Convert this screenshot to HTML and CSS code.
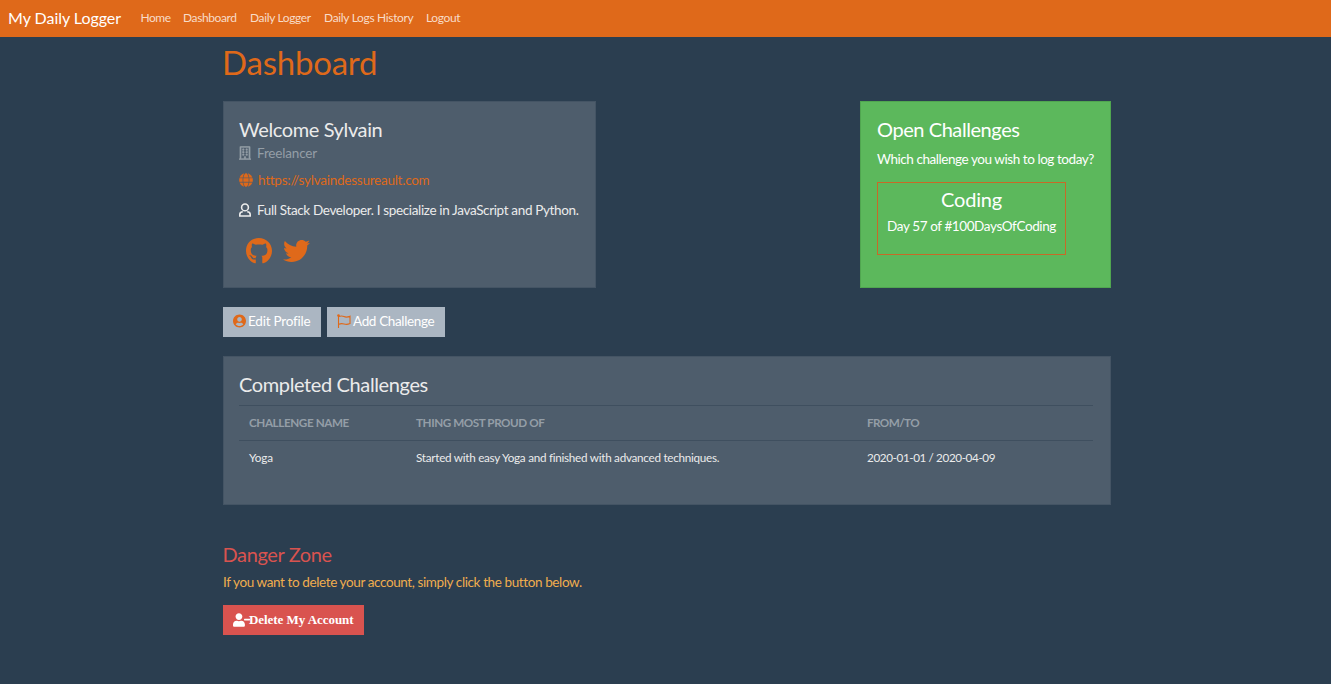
FILE: index.html
```html
<!DOCTYPE html>
<html lang="en">
<head>
<meta charset="utf-8">
<title>My Daily Logger</title>
<link rel="stylesheet" href="styles.css">
</head>
<body>
<nav class="navbar">
  <a class="brand">My Daily Logger</a>
  <a class="nav-link l1">Home</a><a class="nav-link l2">Dashboard</a><a class="nav-link l3">Daily Logger</a><a class="nav-link l4">Daily Logs History</a><a class="nav-link l5">Logout</a>
</nav>
<main class="container">
  <h1><span class="t-h1">Dashboard</span></h1>
  <div class="cards">
    <section class="card profile">
      <h4><span class="t-welcome">Welcome Sylvain</span></h4>
      <div class="row company">
        <svg class="icon i-building" viewBox="0 0 448 512"><path d="M128 148v-40c0-6.600 5.400-12 12-12h40c6.600 0 12 5.400 12 12v40c0 6.600-5.400 12-12 12h-40c-6.600 0-12-5.400-12-12zm140 12h40c6.600 0 12-5.400 12-12v-40c0-6.600-5.400-12-12-12h-40c-6.600 0-12 5.400-12 12v40c0 6.600 5.400 12 12 12zm-128 96h40c6.600 0 12-5.400 12-12v-40c0-6.600-5.400-12-12-12h-40c-6.600 0-12 5.400-12 12v40c0 6.600 5.400 12 12 12zm128 0h40c6.600 0 12-5.400 12-12v-40c0-6.600-5.400-12-12-12h-40c-6.600 0-12 5.400-12 12v40c0 6.600 5.400 12 12 12zm-76 84v-40c0-6.600-5.400-12-12-12h-40c-6.600 0-12 5.400-12 12v40c0 6.600 5.400 12 12 12h40c6.600 0 12-5.400 12-12zm76 12h40c6.600 0 12-5.400 12-12v-40c0-6.600-5.400-12-12-12h-40c-6.600 0-12 5.400-12 12v40c0 6.600 5.400 12 12 12zm180 124v36H0v-36c0-6.600 5.400-12 12-12h19.500V24c0-13.300 10.700-24 24-24h337c13.300 0 24 10.700 24 24v440H436c6.600 0 12 5.400 12 12zM79.500 463H192v-67c0-6.600 5.400-12 12-12h40c6.600 0 12 5.400 12 12v67h112.500V49L80 48z"/></svg>
        <span class="t-free">Freelancer</span>
      </div>
      <div class="row site">
        <svg class="icon i-globe" viewBox="0 0 496 512"><path d="M336.500 160C322 70.700 287.800 8 248 8s-74 62.700-88.500 152h177zM152 256c0 22.200 1.200 43.500 3.300 64h185.300c2.100-20.500 3.300-41.800 3.300-64s-1.200-43.500-3.300-64H155.300c-2.100 20.500-3.300 41.800-3.300 64zm324.700-96c-28.600-67.900-86.500-120.400-158-141.600 24.400 33.800 41.200 84.700 50 141.600h108zM177.200 18.400C105.800 39.600 47.800 92.100 19.300 160h108c8.700-56.900 25.500-107.800 49.900-141.600zM487.400 192H372.700c2.100 21 3.300 42.500 3.300 64s-1.200 43-3.300 64h114.600c5.500-20.500 8.600-41.800 8.600-64s-3.100-43.500-8.500-64zM120 256c0-21.500 1.200-43 3.300-64H8.600C3.200 212.500 0 233.800 0 256s3.200 43.500 8.600 64h114.600c-2-21-3.200-42.500-3.200-64zm39.500 96c14.500 89.300 48.700 152 88.500 152s74-62.700 88.500-152h-177zm159.300 141.600c71.400-21.200 129.400-73.700 158-141.600h-108c-8.800 56.900-25.600 107.800-50 141.600zM19.300 352c28.600 67.900 86.500 120.400 158 141.600-24.400-33.800-41.200-84.700-50-141.600h-108z"/></svg>
        <a class="t-url">https://sylvaindessureault.com</a>
      </div>
      <div class="row bio">
        <svg class="icon i-user" viewBox="0 0 12 14"><g fill="none" stroke="currentColor" stroke-width="1.600"><circle cx="6" cy="4.400" r="3.400"/><path d="M3.800 8.800C2 9 .8 10 .8 11.500v1.500h10.400v-1.500C11.200 10 10 9 8.200 8.800"/></g></svg>
        <span class="t-bio">Full Stack Developer. I specialize in JavaScript and Python.</span>
      </div>
      <div class="social">
        <svg class="i-github" viewBox="0 0 496 512"><path d="M165.900 397.400c0 2-2.300 3.600-5.200 3.600-3.300.3-5.600-1.300-5.600-3.600 0-2 2.300-3.600 5.200-3.600 3-.3 5.600 1.300 5.600 3.600zm-31.100-4.500c-.7 2 1.300 4.300 4.300 4.900 2.600 1 5.600 0 6.200-2s-1.300-4.300-4.300-5.200c-2.600-.7-5.500.3-6.200 2.300zm44.200-1.700c-2.900.7-4.900 2.600-4.600 4.900.3 2 2.900 3.300 5.900 2.600 2.900-.7 4.900-2.600 4.600-4.600-.3-1.900-3-3.200-5.900-2.900zM244.800 8C106.100 8 0 113.300 0 252c0 110.900 69.800 205.800 169.500 239.200 12.800 2.300 17.300-5.600 17.300-12.100 0-6.200-.3-40.400-.3-61.400 0 0-70 15-84.700-29.800 0 0-11.400-29.100-27.800-36.600 0 0-22.900-15.700 1.600-15.400 0 0 24.900 2 38.600 25.800 21.900 38.600 58.600 27.500 72.900 20.900 2.300-16 8.800-27.100 16-33.700-55.900-6.200-112.300-14.300-112.300-110.500 0-27.500 7.600-41.300 23.600-58.900-2.600-6.500-11.100-33.300 2.600-67.900 20.900-6.500 69 27 69 27 20-5.600 41.500-8.500 62.800-8.500s42.800 2.900 62.800 8.500c0 0 48.100-33.600 69-27 13.700 34.700 5.200 61.400 2.600 67.900 16 17.700 25.800 31.500 25.800 58.900 0 96.500-58.900 104.200-114.800 110.500 9.200 7.900 17 22.900 17 46.400 0 33.700-.3 75.400-.3 83.600 0 6.500 4.600 14.400 17.300 12.100C428.200 457.800 496 362.900 496 252 496 113.300 383.500 8 244.800 8z"/></svg>
        <svg class="i-twitter" viewBox="0 0 512 512"><path d="M459.370 151.716c.325 4.548.325 9.097.325 13.645 0 138.720-105.583 298.558-298.558 298.558-59.452 0-114.680-17.219-161.137-47.106 8.447.974 16.568 1.299 25.340 1.299 49.055 0 94.213-16.568 130.274-44.832-46.132-.975-84.792-31.188-98.112-72.772 6.498.974 12.995 1.624 19.818 1.624 9.421 0 18.843-1.300 27.614-3.573-48.081-9.747-84.143-51.980-84.143-102.985v-1.299c13.969 7.797 30.214 12.670 47.431 13.319-28.264-18.843-46.781-51.005-46.781-87.391 0-19.492 5.197-37.360 14.294-52.954 51.655 63.675 129.300 105.258 216.365 109.807-1.624-7.797-2.599-15.918-2.599-24.040 0-57.828 46.782-104.934 104.934-104.934 30.213 0 57.502 12.670 76.670 33.137 23.715-4.548 46.456-13.320 66.599-25.340-7.798 24.366-24.366 44.833-46.132 57.827 21.117-2.273 41.584-8.122 60.426-16.243-14.292 20.791-32.161 39.308-52.628 54.253z"/></svg>
      </div>
    </section>
    <section class="card open">
      <h4><span class="t-open">Open Challenges</span></h4>
      <p><span class="t-which">Which challenge you wish to log today?</span></p>
      <div class="challenge">
        <h4><span class="t-coding">Coding</span></h4>
        <p><span class="t-day">Day 57 of #100DaysOfCoding</span></p>
      </div>
    </section>
  </div>
  <div class="actions">
    <a class="btn edit"><svg class="icon i-circle" viewBox="0 0 496 512"><path d="M248 8C111 8 0 119 0 256s111 248 248 248 248-111 248-248S385 8 248 8zm0 96c48.600 0 88 39.400 88 88s-39.400 88-88 88-88-39.400-88-88 39.400-88 88-88zm0 344c-58.700 0-111.300-26.600-146.500-68.200 18.800-35.400 55.600-59.800 98.500-59.800 2.400 0 4.800.4 7.100 1.100 13 4.200 26.600 6.900 40.900 6.900 14.300 0 28-2.700 40.900-6.900 2.300-.7 4.700-1.100 7.100-1.100 42.900 0 79.700 24.400 98.500 59.800C359.300 421.400 306.700 448 248 448z"/></svg><span class="t-edit">Edit Profile</span></a>
    <a class="btn add"><svg class="icon i-flag" viewBox="0 0 14 14"><g fill="none" stroke="currentColor"><path d="M1.500 1v13" stroke-width="1.100"/><path d="M1.700 2.600c2-.8 3.500-.8 5.300 0s3.500.7 6-.4v7.400c-2.400 1.100-4.200 1-6 .4s-3.300-.6-5.300.3" stroke-width="1.100"/></g><circle cx="1.500" cy="1.500" r="1.300"/></svg><span class="t-add">Add Challenge</span></a>
  </div>
  <section class="card completed">
    <h4><span class="t-comp">Completed Challenges</span></h4>
    <table>
      <thead><tr><th class="c1"><span class="t-th1">CHALLENGE NAME</span></th><th class="c2"><span class="t-th2">THING MOST PROUD OF</span></th><th><span class="t-th3">FROM/TO</span></th></tr></thead>
      <tbody><tr><td><span class="t-yoga">Yoga</span></td><td><span class="t-start">Started with easy Yoga and finished with advanced techniques.</span></td><td><span class="t-date">2020-01-01 / 2020-04-09</span></td></tr></tbody>
    </table>
  </section>
  <section class="danger">
    <h4><span class="t-danger">Danger Zone</span></h4>
    <p><span class="t-warn">If you want to delete your account, simply click the button below.</span></p>
    <button class="delete"><svg class="i-minus" viewBox="0 0 640 512"><path d="M624 208H432c-8.800 0-16 7.200-16 16v32c0 8.800 7.200 16 16 16h192c8.800 0 16-7.200 16-16v-32c0-8.800-7.200-16-16-16zm-400 48c70.700 0 128-57.300 128-128S294.700 0 224 0 96 57.300 96 128s57.300 128 128 128zm89.600 32h-16.700c-22.200 10.200-46.900 16-72.900 16s-50.600-5.800-72.900-16h-16.700C60.200 288 0 348.200 0 422.400V464c0 26.500 21.500 48 48 48h352c26.500 0 48-21.500 48-48v-41.600c0-74.200-60.200-134.400-134.400-134.400z"/></svg><span class="t-del">Delete My Account</span></button>
  </section>
</main>
</body>
</html>
```
FILE: styles.css
```css
* { box-sizing: border-box; }
body { margin: 0; background: #2b3e50; color: #ebebeb; font: 13.500px/21px Lato, sans-serif; white-space: nowrap; letter-spacing: -.37px; }
h1, h4, p { margin: 0; font-weight: 400; }
svg { fill: currentColor; flex: none; display: block; }
.navbar { height: 37px; background: #df691a; display: flex; align-items: center; padding: 0 8px; font-size: 12px; color: #f8dcc8; }
.brand { font-size: 16px; color: #fff; width: 132.500px; letter-spacing: -.03px; padding-bottom: 2px; }
.nav-link { line-height: 18px; padding-bottom: 1px; }
.l1 { width: 42.500px; letter-spacing: -.5px; }
.l2 { width: 67px; letter-spacing: -.39px; }
.l3 { width: 74px; letter-spacing: -.36px; }
.l4 { width: 102px; letter-spacing: -.33px; }
.l5 { letter-spacing: -.38px; }
.container { width: 888px; margin-left: 223px; }
h1 { color: #df691a; font-size: 33px; line-height: 42px; padding-top: 4px; height: 64px; letter-spacing: -.22px; text-indent: -1px; }
.cards { display: flex; justify-content: space-between; }
.card { background: #4e5d6c; border: 1px solid #445464; padding: 15px; }
.profile { width: 373px; height: 187px; }
h4 { font-size: 20px; line-height: 24px; height: 25px; letter-spacing: -.38px; }
.t-open { letter-spacing: -.43px; }
.t-coding { letter-spacing: -.2px; }
.row { display: flex; align-items: center; height: 21px; }
.row span, .row a { padding-top: 2px; }
.icon { height: 14px; margin-right: 6px; }
.company { color: #949ea7; }
.t-free { letter-spacing: -.17px; }
.i-building { width: 12px; stroke: currentColor; stroke-width: 14; }
.site { color: #df691a; margin-top: 6px; }
.site .icon { margin-right: 5px; }
.i-globe { width: 14px; stroke: currentColor; stroke-width: 8; }
.t-url { letter-spacing: -.25px; }
.bio { margin-top: 9px; }
.t-bio { letter-spacing: -.35px; }
.i-user { width: 12px; }
.social { display: flex; color: #df691a; gap: 11px; padding: 17px 0 0 7px; }
.i-github { width: 26px; height: 28px; }
.i-twitter { width: 27px; height: 28px; }
.open { background: #5cb85c; border-color: #50a650; color: #fff; width: 251px; padding-left: 16px; }
.open > p { margin-top: 7px; }
.t-which { letter-spacing: -.44px; }
.challenge { width: 189px; height: 73px; border: 1px solid #c76a28; margin-top: 12px; padding: 4px 9px; text-align: center; }
.challenge p { margin-top: 4px; line-height: 21px; }
.t-day { letter-spacing: -.4px; }
.actions { display: flex; gap: 6px; margin-top: 19px; }
.btn { height: 30px; background: #abb6c2; color: #fff; display: flex; align-items: center; padding: 0 10px 2px; }
.btn .icon { color: #df691a; margin-right: 2px; }
.edit { width: 98px; }
.t-edit { letter-spacing: -.22px; }
.add { width: 118px; }
.t-add { letter-spacing: -.36px; }
.i-circle { width: 13px; }
.i-flag { width: 14px; }
.completed { margin-top: 19px; height: 149px; }
table { margin-top: 8px; width: 854px; border-collapse: collapse; font-size: 11.700px; table-layout: fixed; }
th, td { height: 35px; padding: 0 10px 2px; text-align: left; border-top: 1px solid #3f4f5f; }
th { color: #949ea7; font-weight: 700; letter-spacing: -.41px; }
.t-th2 { letter-spacing: -.44px; }
.t-th3 { letter-spacing: -.57px; }
.t-yoga { letter-spacing: -.15px; }
.t-start { letter-spacing: -.27px; }
.t-date { letter-spacing: -.39px; }
.c1 { width: 167px; }
.c2 { width: 451px; }
.danger { padding-top: 37px; }
.danger h4 { color: #d9534f; text-indent: -.5px; }
.danger p { color: #f0ad4e; margin-top: 5px; }
.t-warn { letter-spacing: -.39px; }
.delete { margin-top: 12px; width: 141px; height: 30px; border: 0; background: #d9534f; color: #fff; display: flex; align-items: center; padding: 0 10px; font: 700 13px "Liberation Serif", serif; letter-spacing: -.05px; white-space: nowrap; }
.i-minus { width: 17px; height: 14px; margin-right: -1px; }
```
